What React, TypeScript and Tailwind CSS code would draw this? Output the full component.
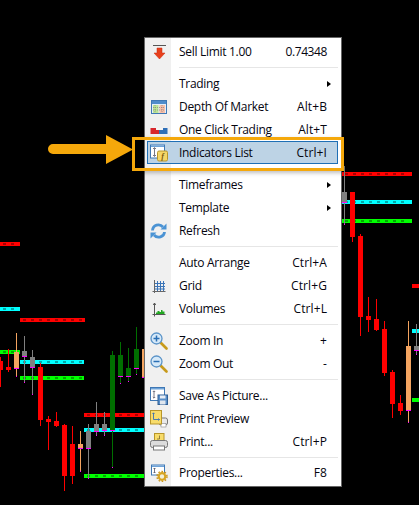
import type { ReactNode } from "react";

// candles: x center, wick top/bottom, body top/bottom, kind
type Kind = "red" | "peach" | "gray" | "green";
const candleColor: Record<Kind, string> = {
  red: "#ff0000",
  peach: "#f4a460",
  gray: "#808080",
  green: "#006f00",
};

const candles: [number, number, number, number, number, Kind][] = [
  [0, 357, 387, 361, 370, "red"],
  [8, 349, 372, 367, 370, "red"],
  [16, 333, 377, 352, 368, "peach"],
  [24, 336, 383, 351, 356, "gray"],
  [32, 350, 395, 357, 367, "gray"],
  [40, 363, 426, 367, 420, "red"],
  [48, 416, 450, 419, 422, "red"],
  [56, 412, 427, 421, 426, "red"],
  [64, 424, 491, 425, 476, "red"],
  [72, 426, 484, 444, 476, "red"],
  [80, 431, 472, 444, 448, "peach"],
  [88, 424, 479, 431, 448, "gray"],
  [96, 402, 436, 424, 431, "gray"],
  [104, 412, 436, 424, 430, "gray"],
  [112, 351, 468, 355, 430, "green"],
  [120, 342, 384, 355, 376, "green"],
  [128, 348, 382, 368, 376, "green"],
  [136, 327, 375, 349, 368, "green"],
  [144, 340, 380, 349, 377, "peach"],
  [344, 166, 225, 192, 202, "gray"],
  [352, 192, 242, 192, 237, "red"],
  [360, 234, 336, 236, 317, "red"],
  [368, 297, 332, 316, 320, "red"],
  [376, 299, 331, 319, 330, "red"],
  [384, 321, 376, 329, 373, "red"],
  [392, 370, 418, 372, 404, "red"],
  [400, 395, 415, 403, 411, "red"],
  [408, 321, 423, 346, 410, "peach"],
  [416, 324, 355, 346, 350, "gray"],
];

// level bars: x1, x2, y, color, dash color
const levels: [number, number, number, string, string][] = [
  [0, 20, 242, "#ff0000", "#a80000"],
  [0, 20, 307, "#00ffff", "#00a8a8"],
  [20, 85, 318, "#ff0000", "#a80000"],
  [0, 20, 350, "#00ff00", "#00a800"],
  [20, 84, 360, "#00ffff", "#00a8a8"],
  [20, 84, 376, "#00ff00", "#00a800"],
  [84, 144, 413, "#ff0000", "#a80000"],
  [84, 144, 428, "#00ffff", "#00a8a8"],
  [84, 144, 474, "#00ff00", "#00a800"],
  [342, 412, 172, "#ff0000", "#a80000"],
  [342, 412, 200, "#00ffff", "#00a8a8"],
  [342, 412, 219, "#00ff00", "#00a800"],
  [412, 419, 284, "#ff0000", "#a80000"],
  [412, 419, 329, "#00ffff", "#00a8a8"],
  [412, 419, 398, "#00ff00", "#00a800"],
];

const Chart = () => (
  <svg className="absolute left-0 top-0" width="419" height="505" shapeRendering="crispEdges">
    {levels.map(([x1, x2, y, color, dash], i) => (
      <g key={i}>
        <rect x={x1} y={y} width={x2 - x1} height={4} fill={color} />
        {Array.from({ length: Math.floor((x2 - x1) / 8) }).map((_, j) => (
          <rect key={j} x={x1 + 3 + j * 8} y={y + 1} width={3} height={2} fill={dash} />
        ))}
      </g>
    ))}
    {candles.map(([x, wt, wb, bt, bb, kind], i) => (
      <g key={i}>
        <rect x={x} y={wt} width={1} height={wb - wt} fill={candleColor[kind]} />
        <rect x={x - 2} y={bt} width={5} height={bb - bt} fill={candleColor[kind]} />
        {kind !== "red" && <rect x={x - 2} y={bb} width={5} height={1} fill="#ff00ff" />}
        {kind !== "red" && <rect x={x} y={wb - 1} width={1} height={1} fill="#ff00ff" />}
      </g>
    ))}
  </svg>
);

const Ico = ({ children }: { children: ReactNode }) => (
  <svg width="18" height="18" viewBox="0 0 18 18">
    {children}
  </svg>
);

const icons: Record<string, ReactNode> = {
  sell: (
    <Ico>
      <rect x="3" y="2" width="13" height="1" fill="#555" />
      <path d="M7 5h5v5h3l-5.500 6L4 10h3z" fill="#e8401c" stroke="#c92a10" strokeWidth=".5" />
    </Ico>
  ),
  depth: (
    <Ico>
      <rect x="1.500" y="2.500" width="15" height="13" fill="#e4eef8" stroke="#3f78b5" />
      <rect x="2" y="3" width="14" height="3" fill="#4f8ccb" />
      <rect x="3" y="7" width="5.500" height="8" fill="#bde596" />
      <rect x="9.500" y="7" width="5.500" height="8" fill="#f8bfa8" />
      <path d="M3 9.500h12M3 12h12M5 7v8M12 7v8" stroke="#777" strokeWidth=".6" strokeDasharray="1 1" />
    </Ico>
  ),
  oneClick: (
    <Ico>
      <rect x="0.500" y="7" width="8.500" height="6" fill="#d8262c" />
      <rect x="9" y="7" width="8.500" height="6" fill="#2f6fb7" />
      <rect x="6" y="7" width="7" height="2" fill="#f4f4f4" />
    </Ico>
  ),
  indicators: (
    <Ico>
      <rect x=".5" y="1" width="14" height="13" fill="#fff" stroke="#3f78b5" />
      <rect x="1" y="1.500" width="13" height="1.500" fill="#6fa3d8" />
      <path d="M4.500 4v8M3 5l1.500-1.500L6 5M3 11l1.500 1.500L6 11" fill="none" stroke="#556" strokeWidth=".8" />
      <rect x="7.500" y="7" width="10" height="10" rx="1.500" fill="#f5d668" stroke="#b8962a" />
      <text x="12.500" y="15" fontSize="8" fontStyle="italic" fontWeight="700" textAnchor="middle" fill="#7a5a10" fontFamily="Liberation Serif, serif">f</text>
    </Ico>
  ),
  refresh: (
    <Ico>
      <path d="M2.500 8.500C2.800 3 9.500 1 13 5" fill="none" stroke="#4b93d4" strokeWidth="2.800" />
      <path d="M10.500 7.500h6v-6z" fill="#4b93d4" />
      <path d="M14.500 10C14.200 15 7.500 17 4 13" fill="none" stroke="#4b93d4" strokeWidth="2.800" />
      <path d="M6.500 10.500h-6v6z" fill="#4b93d4" />
    </Ico>
  ),
  grid: (
    <Ico>
      <path d="M7.500 4v10M10.500 4v10M13.500 4v10M5 6.500h10M5 9.500h10M5 12h10" stroke="#3a74b8" strokeWidth="1" fill="none" />
      <path d="M2.500 14.500h13M4.500 3v13" stroke="#666" strokeWidth="1" fill="none" />
    </Ico>
  ),
  volumes: (
    <Ico>
      <path d="M6 14.500v-2h1.500v-1.500h2v1h1.500v-2h1.500v1.500h2v3z" fill="#22a822" />
      <path d="M2.500 14.500h13M4.500 16.500V3M3.300 5L4.500 3l1.200 2" stroke="#555" strokeWidth="1" fill="none" />
    </Ico>
  ),
  zoomIn: (
    <Ico>
      <path d="M10.500 10.500l6 6" stroke="#c79a1a" strokeWidth="2.600" strokeLinecap="round" />
      <circle cx="6.500" cy="6.500" r="5.500" fill="#d6e9f8" stroke="#5a93c8" strokeWidth="1.300" />
      <path d="M3.500 6.500h6M6.500 3.500v6" stroke="#2a6fb5" strokeWidth="1.500" />
    </Ico>
  ),
  zoomOut: (
    <Ico>
      <path d="M10.500 10.500l6 6" stroke="#c79a1a" strokeWidth="2.600" strokeLinecap="round" />
      <circle cx="6.500" cy="6.500" r="5.500" fill="#d6e9f8" stroke="#5a93c8" strokeWidth="1.300" />
      <path d="M3.500 6.500h6" stroke="#2a6fb5" strokeWidth="1.500" />
    </Ico>
  ),
  save: (
    <Ico>
      <rect x=".5" y=".5" width="14" height="13" fill="#fff" stroke="#3f78b5" />
      <rect x="1" y="1" width="13" height="1.500" fill="#6fa3d8" />
      <path d="M4 4v7M2.800 5l1.200-1.200L5.200 5M2.800 10L4 11.200 5.200 10" fill="none" stroke="#556" strokeWidth=".8" />
      <rect x="8" y="8" width="9.500" height="9.500" fill="#5a8fc8" stroke="#2f5f96" />
      <rect x="10" y="8.500" width="5.500" height="3" fill="#e8eef5" />
      <rect x="10" y="13.500" width="5.500" height="4" fill="#dfe6ee" />
    </Ico>
  ),
  preview: (
    <Ico>
      <rect x="9" y="8" width="8.500" height="7" rx="2" fill="#e8e8e8" stroke="#777" />
      <rect x="11" y="13.500" width="5" height="3.500" fill="#fff" stroke="#888" strokeWidth=".6" />
      <rect x=".5" y=".5" width="11" height="13.500" fill="#f8dc6a" stroke="#b8962a" />
      <path d="M3.500 3v6.500H9.500M2.500 4l1-1.200L4.500 4M8.300 8.500L9.500 9.500 8.300 10.500" fill="none" stroke="#3a6fb0" strokeWidth=".9" />
    </Ico>
  ),
  print: (
    <Ico>
      <rect x="4.500" y=".5" width="9.500" height="8" fill="#f8dc6a" stroke="#b8962a" />
      <path d="M9.500 2.500v3.500H7" fill="none" stroke="#7a6a30" strokeWidth=".8" />
      <rect x=".5" y="7.500" width="17" height="7" rx="2" fill="#dcdcdc" stroke="#777" />
      <rect x="3.500" y="13" width="11" height="4" fill="#fff" stroke="#777" />
    </Ico>
  ),
  properties: (
    <Ico>
      <rect x="1.500" y="1" width="13" height="10" fill="#fff" stroke="#3f78b5" />
      <rect x="2" y="1.500" width="12" height="1.500" fill="#6fa3d8" />
      <path d="M4.500 4v5M3.500 5l1-1 1 1M3.500 8l1 1 1-1" fill="none" stroke="#556" strokeWidth=".8" />
      <circle cx="12" cy="12.500" r="3.300" fill="#f4f0d8" stroke="#d8a520" strokeWidth="2.200" />
      <circle cx="12" cy="12.500" r="5" fill="none" stroke="#c9951a" strokeWidth="1.400" strokeDasharray="1.600 1.600" />
    </Ico>
  ),
};

type Row = { label: string; key?: string; icon?: string; sub?: boolean; active?: boolean };

const groups: { rows: Row[]; gap: string }[] = [
  { rows: [{ label: "Sell Limit 1.00", key: "0.74348", icon: "sell" }], gap: "h-[9px]" },
  {
    rows: [
      { label: "Trading", sub: true },
      { label: "Depth Of Market", key: "Alt+B", icon: "depth" },
      { label: "One Click Trading", key: "Alt+T", icon: "oneClick" },
      { label: "Indicators List", key: "Ctrl+I", icon: "indicators", active: true },
    ],
    gap: "h-[9px]",
  },
  {
    rows: [
      { label: "Timeframes", sub: true },
      { label: "Template", sub: true },
      { label: "Refresh", icon: "refresh" },
    ],
    gap: "h-[9px]",
  },
  {
    rows: [
      { label: "Auto Arrange", key: "Ctrl+A" },
      { label: "Grid", key: "Ctrl+G", icon: "grid" },
      { label: "Volumes", key: "Ctrl+L", icon: "volumes" },
    ],
    gap: "h-[9px]",
  },
  {
    rows: [
      { label: "Zoom In", key: "+", icon: "zoomIn" },
      { label: "Zoom Out", key: "-", icon: "zoomOut" },
    ],
    gap: "h-[9px]",
  },
  {
    rows: [
      { label: "Save As Picture...", icon: "save" },
      { label: "Print Preview", icon: "preview" },
      { label: "Print...", key: "Ctrl+P", icon: "print" },
    ],
    gap: "h-[8px]",
  },
  { rows: [{ label: "Properties...", key: "F8", icon: "properties" }], gap: "" },
];

const MenuRow = ({ row }: { row: Row }) => (
  <div
    className={`relative flex h-[23px] items-center pr-[14px] text-[12px] text-[#05050f] ${
      row.active ? "z-10" : ""
    }`}
  >
    {row.active && (
      <div className="absolute left-[2px] right-[3px] top-0 bottom-0 border border-[#1f6fb5] bg-[#bdd3e5]" />
    )}
    <div className="relative flex w-[34px] shrink-0 justify-center pl-[1px] pr-[8px]">
      {row.icon && icons[row.icon]}
    </div>
    <span className="relative flex-1 tracking-[-0.3px]">{row.label}</span>
    {row.key && (
      <span className={`relative ${row.icon === "sell" ? "tracking-[-0.4px]" : "tracking-[0.1px]"}`}>{row.key}</span>
    )}
    {row.sub && (
      <span className="absolute right-[10px] h-0 w-0 border-y-[3.5px] border-l-[4px] border-y-transparent border-l-black" />
    )}
  </div>
);

const App = () => {
  return (
    <div className="relative h-[505px] w-[419px] overflow-hidden bg-black font-['Open_Sans',sans-serif]">
      <Chart />

      {/* context menu */}
      <div className="absolute left-[144px] top-[37px] h-[450px] w-[198px] border border-[#666666] bg-white pt-[2px]">
        <div className="absolute bottom-0 left-0 top-0 w-[26px] bg-[#f0f0f0]" />
        <div className="relative">
          {groups.map((g, i) => (
            <div key={i}>
              {g.rows.map((r) => (
                <MenuRow key={r.label} row={r} />
              ))}
              {g.gap && (
                <div className={`flex items-center pl-[34px] pr-[3px] ${g.gap}`}>
                  <div className="h-px w-full bg-[#e6e6e6]" />
                </div>
              )}
            </div>
          ))}
        </div>
      </div>

      {/* highlight box and arrow */}
      <div className="absolute left-[132px] top-[137px] h-[34px] w-[212px] border-[3px] border-[#f5a80b] shadow-[0_2px_4px_rgba(0,0,0,0.25)]" />
      <svg className="absolute left-[46px] top-[132px]" width="90" height="34" viewBox="0 0 90 34">
        <path d="M7 12h53V3l27 14.500L60 32V22H7a5 5 0 0 1 0-10z" fill="#f5a80b" />
      </svg>
    </div>
  );
};

export default App;
